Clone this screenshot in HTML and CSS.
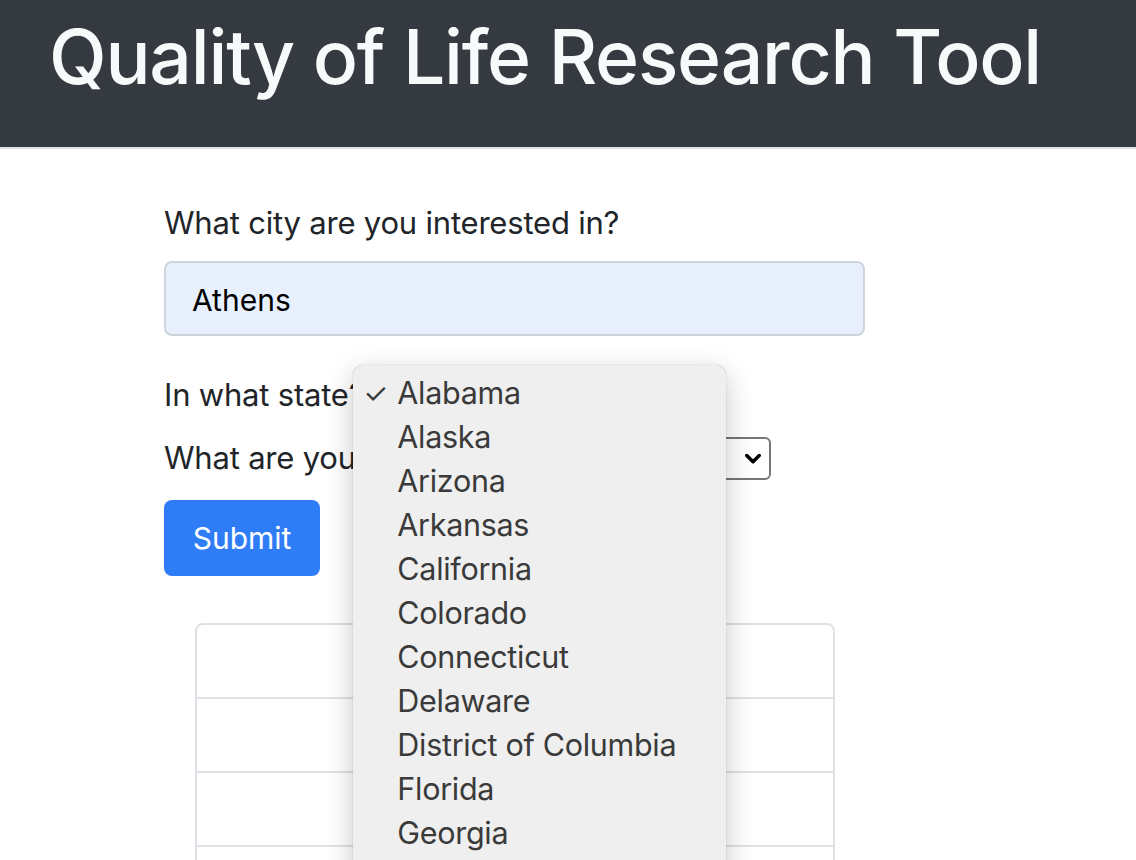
FILE: index.html
```html
<!DOCTYPE html>
<html lang="en">
<head>
<meta charset="utf-8">
<title>Quality of Life Research Tool</title>
<link rel="stylesheet" href="styles.css">
</head>
<body>
<header class="hero">
  <h1 class="hero-title">Quality of Life Research Tool</h1>
</header>
<main class="page">
  <form class="form">
    <div class="group">
      <label class="label">What city are you interested in?</label>
      <div class="input">Athens</div>
    </div>
    <div class="inline-row state-row">
      <label class="label">In what state?</label>
      <div class="select state-select">
        <span class="select-text">Alabama</span>
        <div class="menu">
          <div class="menu-item selected"><span class="check">✓</span>Alabama</div>
          <div class="menu-item"><span class="check"></span>Alaska</div>
          <div class="menu-item"><span class="check"></span>Arizona</div>
          <div class="menu-item"><span class="check"></span>Arkansas</div>
          <div class="menu-item"><span class="check"></span>California</div>
          <div class="menu-item"><span class="check"></span>Colorado</div>
          <div class="menu-item"><span class="check"></span>Connecticut</div>
          <div class="menu-item"><span class="check"></span>Delaware</div>
          <div class="menu-item"><span class="check"></span>District of Columbia</div>
          <div class="menu-item"><span class="check"></span>Florida</div>
          <div class="menu-item"><span class="check"></span>Georgia</div>
        </div>
      </div>
    </div>
    <div class="inline-row topic-row">
      <label class="label">What are you interested in?</label>
      <div class="select topic-select">
        <svg class="chev" viewBox="0 0 16 16" width="20" height="20"><path d="M3 6 L8 11 L13 6" fill="none" stroke="#000" stroke-width="2.8" stroke-linecap="round" stroke-linejoin="round"/></svg>
      </div>
    </div>
    <button type="button" class="btn">Submit</button>
  </form>
  <table class="results">
    <tr><td></td></tr>
    <tr><td></td></tr>
    <tr><td></td></tr>
    <tr><td></td></tr>
  </table>
</main>
</body>
</html>
```

FILE: styles.css
```css
html, body {
  margin: 0;
  padding: 0;
  background: #ffffff;
  overflow: hidden;
}
body {
  font-family: Inter, "Liberation Sans", sans-serif;
  color: #212529;
  height: 860px;
}
.hero {
  background: #343a40;
  height: 147px;
  border-bottom: 2px solid #dee2e6;
  padding: 0 0 0 49px;
  box-sizing: content-box;
}
.hero-title {
  margin: 0;
  padding-top: 12px;
  color: #f8f9fa;
  font-size: 75px;
  font-weight: 500;
  line-height: 90px;
  letter-spacing: -1.2px;
}
.page {
  padding-left: 164px;
  padding-top: 51px;
}
.form {
  width: 701px;
}
.label {
  display: block;
  font-size: 31px;
  line-height: 46px;
  color: #212529;
  letter-spacing: -0.2px;
  white-space: nowrap;
}
.group .label {
  margin-bottom: 15px;
}
.input {
  box-sizing: border-box;
  height: 75px;
  border: 2px solid #ced4da;
  border-radius: 8px;
  background: #e8f0fe;
  padding: 2px 26px 0;
  font-size: 30px;
  line-height: 71px;
  color: #000;
}
.inline-row {
  display: flex;
  align-items: center;
}
.state-row {
  margin-top: 36px;
  height: 46px;
}
.topic-row {
  margin-top: 17px;
  height: 46px;
  width: 607px;
}
.select {
  position: relative;
  box-sizing: border-box;
  height: 43px;
  border: 2px solid #767676;
  border-radius: 6px;
  background: #fff;
}
.state-select {
  margin-left: 6px;
  width: 240px;
}
.select-text {
  font-size: 28px;
  line-height: 39px;
  padding-left: 10px;
}
.topic-select {
  margin-left: 10px;
  flex: 1;
  display: flex;
  align-items: center;
  justify-content: flex-end;
  padding-right: 6px;
}
.chev {
  display: block;
}
.menu {
  position: absolute;
  left: -19px;
  top: -11px;
  width: 373px;
  height: 600px;
  background: #efefef;
  border-radius: 10px;
  box-shadow: 0 0 1px rgba(0,0,0,0.35), 0 8px 28px rgba(0,0,0,0.22);
  padding-top: 6px;
  box-sizing: border-box;
  z-index: 10;
}
.menu-item {
  display: flex;
  align-items: center;
  height: 44px;
  font-size: 30.5px;
  color: #3a3a3a;
  letter-spacing: -0.3px;
  white-space: nowrap;
}
.check {
  display: inline-block;
  width: 44px;
  padding-left: 10px;
  box-sizing: border-box;
  font-size: 28px;
  color: #3a3a3a;
}
.btn {
  display: block;
  margin-top: 19px;
  width: 156px;
  height: 76px;
  border: 0;
  border-radius: 8px;
  background: #2f7df6;
  color: #fff;
  font-family: Inter, "Liberation Sans", sans-serif;
  font-size: 30px;
  padding: 0;
}
.results {
  margin-top: 47px;
  margin-left: 31px;
  width: 640px;
  border-collapse: separate;
  border-spacing: 0;
  border: 2px solid #dee2e6;
  border-radius: 8px 8px 0 0;
}
.results td {
  height: 72px;
  padding: 0;
  border-top: 2px solid #dee2e6;
}
.results tr:first-child td {
  border-top: 0;
}
```
